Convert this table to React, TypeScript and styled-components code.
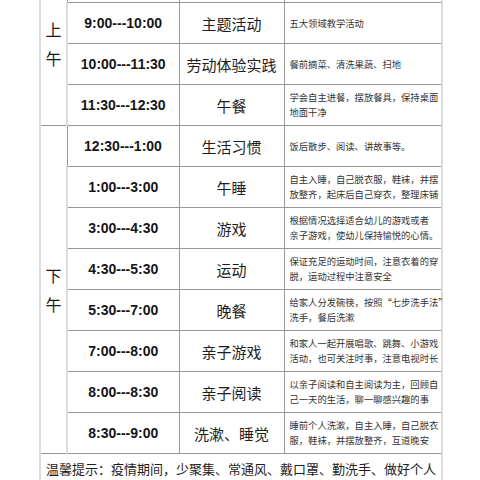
import styled, { createGlobalStyle } from "styled-components";

type Row = {
    time: string
    activity: string
    note: string[]
}

// the first row sits above the top edge of the picture, only its bottom line shows
const morning: Row[] = [
    {time: "", activity: "", note: []},
    {time: "9:00---10:00", activity: "主题活动", note: ["五大领域教学活动"]},
    {time: "10:00---11:30", activity: "劳动体验实践", note: ["餐前摘菜、清洗果蔬、扫地"]},
    {time: "11:30---12:30", activity: "午餐", note: ["学会自主进餐，摆放餐具，保持桌面", "地面干净"]},
]

const afternoon: Row[] = [
    {time: "12:30---1:00", activity: "生活习惯", note: ["饭后散步、阅读、讲故事等。"]},
    {time: "1:00---3:00", activity: "午睡", note: ["自主入睡，自己脱衣服，鞋袜，并摆", "放整齐，起床后自己穿衣，整理床铺"]},
    {time: "3:00---4:30", activity: "游戏", note: ["根据情况选择适合幼儿的游戏或者", "亲子游戏，使幼儿保持愉悦的心情。"]},
    {time: "4:30---5:30", activity: "运动", note: ["保证充足的运动时间，注意衣着的穿", "脱，运动过程中注意安全"]},
    {time: "5:30---7:00", activity: "晚餐", note: ["给家人分发碗筷，按照“七步洗手法”", "洗手，餐后洗漱"]},
    {time: "7:00---8:00", activity: "亲子游戏", note: ["和家人一起开展唱歌、跳舞、小游戏", "活动，也可关注时事，注意电视时长"]},
    {time: "8:00---8:30", activity: "亲子阅读", note: ["以亲子阅读和自主阅读为主，回顾自", "己一天的生活，聊一聊感兴趣的事"]},
    {time: "8:30---9:00", activity: "洗漱、睡觉", note: ["睡前个人洗漱，自主入睡，自己脱衣", "服，鞋袜，并摆放整齐，互道晚安"]},
]

const columnWidths = [27, 112, 105, 158]

const GlobalStyle = createGlobalStyle`
  html, body {
    margin: 0;
    padding: 0;
    background: #ffffff;
  }
`

function Section(props: { label: string[], rows: Row[] }) {
    return (
        <>
            {props.rows.map((row, i) => (
                <tr key={i}>
                    {i === 0 && (
                        <StyledPeriod rowSpan={props.rows.length}>
                            {props.label.map((ch, k) => <div key={k}>{ch}</div>)}
                        </StyledPeriod>
                    )}
                    <StyledTime>{row.time}</StyledTime>
                    <StyledActivity>{row.activity}</StyledActivity>
                    <StyledNote>
                        {row.note.map((line, k) => <div key={k}>{line}</div>)}
                    </StyledNote>
                </tr>
            ))}
        </>
    )
}

export default function App() {
    return (
        <StyledPage>
            <GlobalStyle/>
            <StyledTable>
                <colgroup>
                    {columnWidths.map((w, i) => <StyledCol key={i} $width={w}/>)}
                </colgroup>
                <tbody>
                    <Section label={["上", "午"]} rows={morning}/>
                    <Section label={["下", "午"]} rows={afternoon}/>
                    <tr>
                        <StyledTip colSpan={4}>
                            温馨提示：疫情期间，少聚集、常通风、戴口罩、勤洗手、做好个人卫生防护，保持良好的作息习惯。
                        </StyledTip>
                    </tr>
                </tbody>
            </StyledTable>
        </StyledPage>
    )
}

const StyledPage = styled.div`
  width: 480px;
  height: 480px;
  overflow: hidden;
  padding-left: 39px;
  box-sizing: border-box;
  background: #ffffff;
`

const StyledTable = styled.table`
  margin-top: -39px;
  width: 402px;
  table-layout: fixed;
  border-collapse: collapse;
  font-family: "Noto Sans CJK SC", "Noto Sans", sans-serif;
  color: #1e1e1e;

  td {
    border: 1px solid #979797;
    height: 41px;
    padding: 0;
    box-sizing: border-box;
  }

  td:first-child {
    border-left: 2px solid #dcdcdc;
  }

  td:last-child {
    border-right: 2px solid #dcdcdc;
  }
`

const StyledCol = styled.col<{ $width: number }>`
  width: ${p => p.$width}px;
`

const StyledPeriod = styled.td`
  text-align: center;
  vertical-align: middle;
  font-size: 16px;
  line-height: 29px;
  color: #1a1a1a;
`

const StyledTime = styled.td`
  text-align: center;
  font-family: "Liberation Sans", Arial, sans-serif;
  font-weight: bold;
  font-size: 14px;
  color: #151515;
`

const StyledActivity = styled.td`
  text-align: center;
  font-size: 15px;
  color: #1e1e1e;
`

const StyledNote = styled.td`
  && {
    padding-left: 5px;
  }
  text-align: left;
  font-size: 9.3px;
  line-height: 15px;
  white-space: nowrap;
  color: #333333;
`

const StyledTip = styled.td`
  && {
    padding: 4px 0 0 5px;
    border-bottom: none;
  }
  vertical-align: top;
  font-size: 13px;
  line-height: 22px;
  color: #1e1e1e;
`
